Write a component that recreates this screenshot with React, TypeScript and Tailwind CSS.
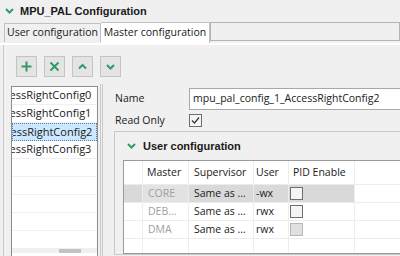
import React from "react";

const green = "#2f9a6a";

function Chevron({ className }: { className?: string }) {
  return (
    <svg className={className} width="9" height="6" viewBox="0 0 9 6">
      <path d="M1 1 L4.5 4.5 L8 1" fill="none" stroke={green} strokeWidth="2" />
    </svg>
  );
}

function ToolButton({ children }: { children: React.ReactNode }) {
  return (
    <div className="flex h-[21px] w-[21px] items-center justify-center border border-[#c4c4c4] bg-[#e4e4e4]">
      <svg width="11" height="11" viewBox="0 0 11 11">
        {children}
      </svg>
    </div>
  );
}

function Box({ disabled, checked }: { disabled?: boolean; checked?: boolean }) {
  return (
    <div
      className={
        disabled
          ? "h-[13px] w-[13px] shrink-0 border border-[#b8b8b8] bg-[#e0e0e0]"
          : "flex h-[13px] w-[13px] shrink-0 items-center justify-center border border-[#6e6e6e] bg-[#f4f4f4]"
      }
    >
      {checked ? (
        <svg width="11" height="11" viewBox="0 0 11 11">
          <path d="M2 5.5 L4.5 8 L9 2.5" fill="none" stroke="#333" strokeWidth="1.2" />
        </svg>
      ) : null}
    </div>
  );
}

const configs = ["AccessRightConfig0", "AccessRightConfig1", "AccessRightConfig2", "AccessRightConfig3"];

const rows = [
  { master: "CORE", sup: "Same as ...", user: "-wx", disabled: false, selected: true },
  { master: "DEB...", sup: "Same as ...", user: "rwx", disabled: false, selected: false },
  { master: "DMA", sup: "Same as ...", user: "rwx", disabled: true, selected: false },
];

const cols = "grid grid-cols-[19px_46px_65px_35px_66px_1fr]";
const bold = "font-bold text-[11px] [font-family:'Liberation_Sans',sans-serif]";

export default function App() {
  return (
    <div className="h-[256px] w-[400px] overflow-hidden bg-[#f0f0f0] text-[10.5px] text-[#1a1a1a] [font-family:'Open_Sans',sans-serif]">
      <div className="flex h-[22px] items-center gap-[6px] pl-[5px]">
        <Chevron />
        <span className={bold}>MPU_PAL Configuration</span>
      </div>

      <div className="flex h-[21px]">
        <div className="w-[4px]" />
        <div className="mt-[1px] flex h-[19px] w-[97px] items-center justify-center border border-b-0 border-[#c0c0c0]">
          User configuration
        </div>
        <div className="flex h-[21px] w-[109px] items-center justify-center border border-b-0 border-l-0 border-[#c0c0c0] bg-white">
          Master configuration
        </div>
        <div className="h-[19px] flex-1 border border-[#b4b4b4]" />
      </div>

      <div className="h-[2px] bg-white" />

      <div className="ml-[3px] h-[213px] border-l border-[#c8c8c8]">
        <div className="flex gap-[7px] pl-[12px] pt-[11px]">
          <ToolButton>
            <path d="M5.5 0.5 V10.5 M0.5 5.5 H10.5" stroke={green} strokeWidth="2" />
          </ToolButton>
          <ToolButton>
            <path d="M1.5 1.5 L9.5 9.5 M9.5 1.5 L1.5 9.5" stroke={green} strokeWidth="2" />
          </ToolButton>
          <ToolButton>
            <path d="M2 7.5 L5.5 4 L9 7.5" fill="none" stroke={green} strokeWidth="2" />
          </ToolButton>
          <ToolButton>
            <path d="M2 4 L5.5 7.5 L9 4" fill="none" stroke={green} strokeWidth="2" />
          </ToolButton>
        </div>

        <div className="mt-[7px] flex h-[172px]">
          <div className="ml-[7px] mt-[2px] flex w-[87px] shrink-0 flex-col overflow-hidden border border-b-0 border-[#8c8c8c] bg-white">
            {Array.from({ length: 9 }).map((_, i) => (
              <div
                key={i}
                className={
                  i === 2
                    ? "flex h-[18px] shrink-0 items-center overflow-hidden border border-dotted border-[#5a7fa8] bg-[#cce8ff]"
                    : "flex h-[18px] shrink-0 items-center overflow-hidden border-b border-[#efefef]"
                }
              >
                {configs[i] ? <span className="ml-[-20px] whitespace-nowrap text-[11px]">{configs[i]}</span> : null}
              </div>
            ))}
            <div className="flex h-[4px] shrink-0 bg-[#f0f0f0] pl-[47px]">
              <div className="h-[4px] w-[22px] bg-[#c2c2c2]" />
            </div>
          </div>

          <div className="ml-[2px] w-[3px] shrink-0 border-x border-[#c8c8c8]" />

          <div className="flex min-w-0 flex-1 flex-col overflow-hidden pl-[11px] pt-[4px]">
            <div className="flex h-[22px] items-center">
              <span className="w-[75px] shrink-0 pl-[1px]">Name</span>
              <div className="flex h-[22px] w-[240px] shrink-0 items-center border border-[#a8a8a8] bg-white pl-[3px] text-[10.5px]">
                mpu_pal_config_1_AccessRightConfig2
              </div>
            </div>
            <div className="flex h-[21px] items-center">
              <span className="w-[75px] shrink-0 pl-[1px]">Read Only</span>
              <Box checked />
            </div>

            <div className="w-[320px] shrink-0 border border-[#c8c8c8]">
              <div className="flex h-[28px] items-center gap-[7px] pl-[12px]">
                <Chevron />
                <span className={bold}>User configuration</span>
              </div>
              <div className="ml-[8px] border border-[#9a9a9a] bg-white">
                <div className={`${cols} h-[23px] items-center`}>
                  <div className="h-full border-r border-[#ececec]" />
                  <div className="flex h-full items-center border-r border-[#ececec] pl-[4px]">Master</div>
                  <div className="flex h-full items-center border-r border-[#ececec] pl-[5px]">Supervisor</div>
                  <div className="flex h-full items-center border-r border-[#ececec] pl-[2px]">User</div>
                  <div className="flex h-full items-center border-r border-[#ececec] pl-[4px]">PID Enable</div>
                  <div />
                </div>
                {rows.map((r) => (
                  <div key={r.master} className={`${cols} h-[18px] border-t border-[#ececec]`}>
                    <div className={r.selected ? "border-r border-[#ececec] bg-[#d9d9d9]" : "border-r border-[#ececec]"} />
                    <div
                      className={
                        r.selected
                          ? "flex items-center border-r border-[#ececec] bg-[#e2e2e2] pl-[5px] text-[#a0a0a0]"
                          : "flex items-center border-r border-[#ececec] pl-[5px] text-[#a0a0a0]"
                      }
                    >
                      {r.master}
                    </div>
                    <div className={r.selected ? "flex items-center border-r border-[#ececec] bg-[#d9d9d9] pl-[5px]" : "flex items-center border-r border-[#ececec] pl-[5px]"}>
                      {r.sup}
                    </div>
                    <div className={r.selected ? "flex items-center border-r border-[#ececec] bg-[#d9d9d9] pl-[2px]" : "flex items-center border-r border-[#ececec] pl-[2px]"}>
                      {r.user}
                    </div>
                    <div className={r.selected ? "flex items-center border-r border-[#ececec] bg-[#d9d9d9] pl-[1px]" : "flex items-center border-r border-[#ececec] pl-[1px]"}>
                      <Box disabled={r.disabled} />
                    </div>
                    <div />
                  </div>
                ))}
                <div className={`${cols} h-[15px] border-t border-[#ececec]`}>
                  <div className="border-r border-[#ececec]" />
                  <div className="border-r border-[#ececec]" />
                  <div className="border-r border-[#ececec]" />
                  <div className="border-r border-[#ececec]" />
                  <div className="border-r border-[#ececec]" />
                  <div />
                </div>
              </div>
            </div>
          </div>
        </div>
      </div>
    </div>
  );
}
